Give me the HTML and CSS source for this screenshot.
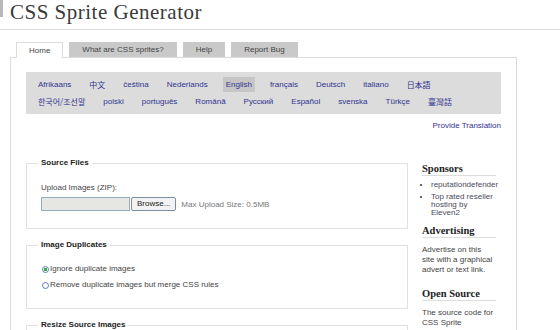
FILE: index.html
```html
<!DOCTYPE html>
<html lang="en">
<head>
    <meta charset="UTF-8">
    <meta name="viewport" content="width=device-width, initial-scale=1.0">
    <title>CSS Sprite Generator</title>
    <link rel="stylesheet" href="styles.css">
</head>
<body>
    <div class="masthead">
        <span class="logo-edge"></span>
        <h1>CSS Sprite Generator</h1>
    </div>
    <ul class="tabs">
        <li class="active"><a href="#">Home</a></li>
        <li><a href="#">What are CSS sprites?</a></li>
        <li><a href="#">Help</a></li>
        <li><a href="#">Report Bug</a></li>
    </ul>
    <div class="container">
        <ul class="languages">
            <li><a href="#">Afrikaans</a></li>
            <li><a href="#" lang="zh">中文</a></li>
            <li><a href="#">čeština</a></li>
            <li><a href="#">Nederlands</a></li>
            <li class="current"><a href="#">English</a></li>
            <li><a href="#">français</a></li>
            <li><a href="#">Deutsch</a></li>
            <li><a href="#">italiano</a></li>
            <li><a href="#" lang="ja">日本語</a></li>
            <li><a href="#" lang="ko">한국어/조선말</a></li>
            <li><a href="#">polski</a></li>
            <li><a href="#">português</a></li>
            <li><a href="#">Română</a></li>
            <li><a href="#">Русский</a></li>
            <li><a href="#">Español</a></li>
            <li><a href="#">svenska</a></li>
            <li><a href="#">Türkçe</a></li>
            <li><a href="#" lang="zh-TW">臺灣話</a></li>
        </ul>
        <p class="translate"><a href="#">Provide Translation</a></p>

        <div class="columns">
            <form class="main">
                <fieldset class="sources">
                    <legend>Source Files</legend>
                    <label class="field-label" for="zip">Upload Images (ZIP):</label>
                    <div class="upload-row">
                        <input type="text" id="zip" class="file-path" readonly>
                        <button type="button" class="browse">Browse...</button>
                        <span class="hint">Max Upload Size: 0.5MB</span>
                    </div>
                </fieldset>

                <fieldset class="duplicates">
                    <legend>Image Duplicates</legend>
                    <label class="radio-row"><input type="radio" name="dupes" checked> Ignore duplicate images</label>
                    <label class="radio-row"><input type="radio" name="dupes"> Remove duplicate images but merge CSS rules</label>
                </fieldset>

                <fieldset>
                    <legend>Resize Source Images</legend>
                </fieldset>
            </form>

            <div class="sidebar">
                <h3>Sponsors</h3>
                <ul>
                    <li><a href="#">reputationdefender</a></li>
                    <li><a href="#">Top rated reseller hosting by Eleven2</a></li>
                </ul>
                <h3>Advertising</h3>
                <p>Advertise on this site with a graphical advert or text link.</p>
                <h3>Open Source</h3>
                <p>The source code for CSS Sprite Generator is available.</p>
            </div>
        </div>
    </div>
</body>
</html>
```

FILE: styles.css
```css
* {
    box-sizing: border-box;
}

body {
    margin: 0;
    background-color: #ffffff;
    color: #333;
    font-family: "Liberation Sans", Arial, sans-serif;
    font-size: 8px;
    overflow: hidden;
}

a {
    text-decoration: none;
}

/* Header */
.masthead {
    display: flex;
    align-items: flex-start;
    height: 30px;
    border-bottom: 1px solid #dcdcdc;
}

.logo-edge {
    width: 3px;
    height: 17px;
    background-color: #b8b8b8;
}

h1 {
    margin: 1px 0 0 7px;
    font-family: "Liberation Serif", Georgia, serif;
    font-size: 21px;
    line-height: 23px;
    font-weight: normal;
    letter-spacing: 0.5px;
    color: #3a3a3a;
}

/* Tabs */
.tabs {
    display: flex;
    align-items: flex-start;
    gap: 6px;
    list-style: none;
    margin: 12px 0 0 16px;
    padding: 0;
}

.tabs a {
    display: block;
    padding: 0 13px;
    line-height: 15px;
    background-color: #c9c9c9;
    color: #444;
}

.tabs .active {
    position: relative;
    z-index: 1;
}

.tabs .active a {
    padding: 0 12px;
    line-height: 15px;
    background-color: #fff;
    border: 1px solid #dcdcdc;
    border-bottom: none;
}

/* Main box */
.container {
    width: 507px;
    margin: -1px 0 0 10px;
    padding: 14px 15px;
    border: 1px solid #dcdcdc;
    border-bottom: none;
}

.languages {
    display: flex;
    flex-wrap: wrap;
    row-gap: 2px;
    list-style: none;
    margin: 0;
    padding: 5px 4px 5px 9px;
    background-color: #dcdcdc;
}

.languages a {
    display: block;
    margin-right: 12px;
    padding: 0 3px;
    line-height: 15px;
    color: #33338f;
}

.languages a:lang(zh),
.languages a:lang(ja),
.languages a:lang(ko) {
    font-family: "Noto Sans CJK SC", "Noto Sans CJK JP", "Noto Sans CJK KR", sans-serif;
}

.languages .current a {
    background-color: #c6c6c6;
}

.translate {
    margin: 7px 0 0;
    line-height: 10px;
    text-align: right;
}

.translate a {
    color: #33338f;
}

.columns {
    display: flex;
    gap: 14px;
    margin-top: 27px;
}

.main {
    flex: 0 0 382px;
}

fieldset {
    margin: 0 0 11px;
    padding: 0 14px 15px;
    border: 1px solid #e0e0e0;
}

fieldset.sources {
    padding-bottom: 17px;
}

fieldset.duplicates {
    padding-bottom: 17px;
}

legend {
    margin-left: -3px;
    padding: 0 3px;
    font-weight: bold;
    line-height: 10px;
    color: #222;
}

.field-label {
    display: block;
    margin-top: 15px;
    line-height: 10px;
    color: #444;
}

.upload-row {
    display: flex;
    align-items: center;
    margin-top: 4px;
}

.file-path {
    width: 89px;
    height: 14px;
    margin: 0;
    padding: 0;
    border: 1px solid #98aabd;
    background-color: #e6e6e2;
}

.browse {
    height: 14px;
    margin: 0 0 0 1px;
    padding: 0 5px;
    border: 1px solid #7b8ea3;
    border-radius: 2px;
    background-color: #f2f2f2;
    font-family: inherit;
    font-size: 8px;
    line-height: 12px;
    color: #222;
}

.hint {
    margin-left: 5px;
    color: #777;
}

.radio-row {
    display: flex;
    align-items: center;
    margin-top: 4px;
    line-height: 12px;
    color: #444;
}

.radio-row:first-of-type {
    margin-top: 13px;
}

.radio-row input {
    appearance: none;
    width: 7px;
    height: 7px;
    margin: 0 1px 0 1px;
    border: 1px solid #5a7fae;
    border-radius: 50%;
    background-color: #fff;
}

.radio-row input:checked {
    background: radial-gradient(circle, #3aa84a 0 1.6px, #fff 2px);
}

/* Sidebar */
.sidebar {
    width: 74px;
    padding-top: 5px;
}

.sidebar h3 {
    margin: 0;
    font-family: "Liberation Serif", Georgia, serif;
    font-size: 10.5px;
    line-height: 12px;
    color: #222;
    border-bottom: 1px solid #dcdcdc;
}

.sidebar ul {
    margin: 5px 0 8px;
    padding-left: 9px;
    line-height: 8px;
}

.sidebar li {
    margin-bottom: 4px;
}

.sidebar li a {
    color: #4a4a5a;
}

.sidebar p {
    margin: 7px 0 13px;
    padding-right: 1.5px;
    line-height: 10px;
    color: #444;
}
```
